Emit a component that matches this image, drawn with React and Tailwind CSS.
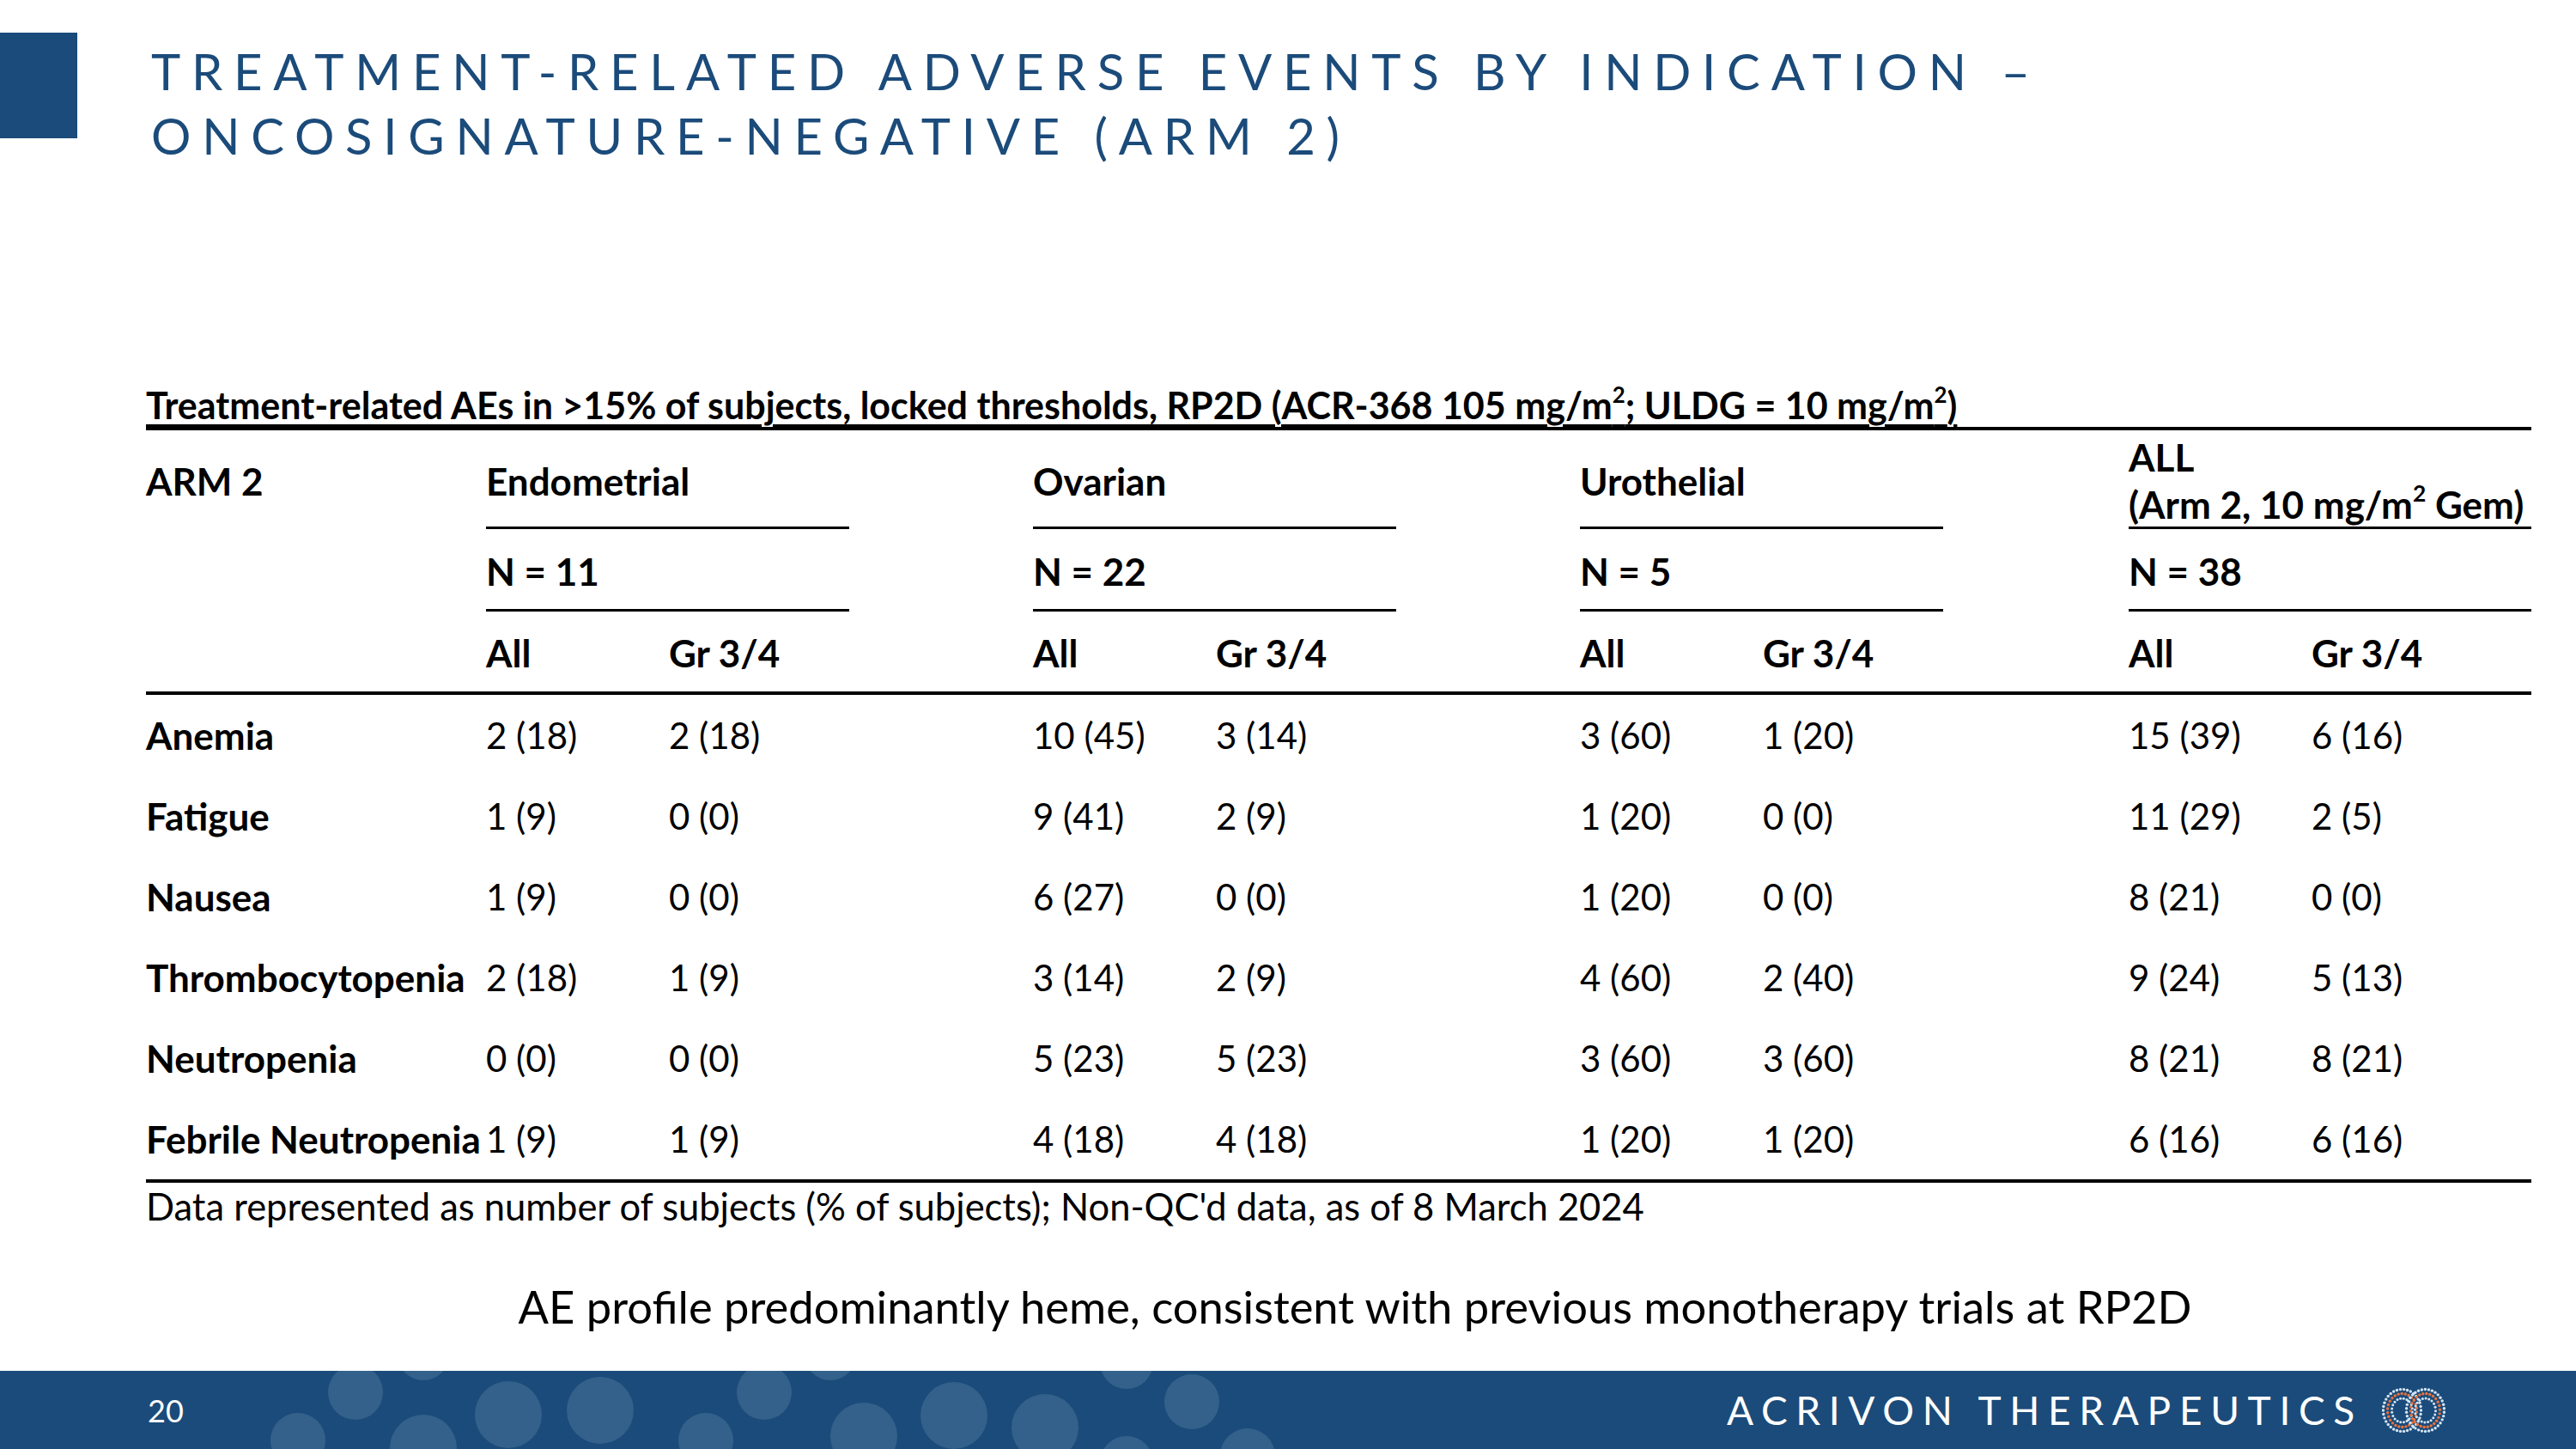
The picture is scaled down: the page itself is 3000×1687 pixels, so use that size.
import React from "react";

const COLS =
  "grid grid-cols-[396px_213px_210px_214px_213px_210px_214px_213px_210px_216px_213px_256px]";

const data = [
  ["Anemia", "2 (18)", "2 (18)", "10 (45)", "3 (14)", "3 (60)", "1 (20)", "15 (39)", "6 (16)"],
  ["Fatigue", "1 (9)", "0 (0)", "9 (41)", "2 (9)", "1 (20)", "0 (0)", "11 (29)", "2 (5)"],
  ["Nausea", "1 (9)", "0 (0)", "6 (27)", "0 (0)", "1 (20)", "0 (0)", "8 (21)", "0 (0)"],
  ["Thrombocytopenia", "2 (18)", "1 (9)", "3 (14)", "2 (9)", "4 (60)", "2 (40)", "9 (24)", "5 (13)"],
  ["Neutropenia", "0 (0)", "0 (0)", "5 (23)", "5 (23)", "3 (60)", "3 (60)", "8 (21)", "8 (21)"],
  ["Febrile Neutropenia", "1 (9)", "1 (9)", "4 (18)", "4 (18)", "1 (20)", "1 (20)", "6 (16)", "6 (16)"],
];

const circles = [
  [414, 25, 32],
  [493, -19, 30],
  [592, 51, 39],
  [699, 46, 39],
  [347, 81, 32],
  [493, 90, 39],
  [822, 81, 32],
  [890, 25, 32],
  [967, -19, 30],
  [1006, 76, 39],
  [1111, 52, 39],
  [1217, 66, 39],
  [1312, -10, 31],
  [1388, 36, 32],
  [1312, 107, 31],
  [1453, 99, 32],
];

function FooterPattern() {
  return (
    <svg className="absolute inset-0" width="3000" height="91" viewBox="0 0 3000 91">
      {circles.map(([cx, cy, r], i) => (
        <circle key={i} cx={cx} cy={cy} r={r} fill="#33618b" />
      ))}
    </svg>
  );
}

function ringDots(cx, cy, rx, ry, n, color, rad, offset = 0) {
  const out = [];
  for (let i = 0; i < n; i++) {
    const a = (i / n) * Math.PI * 2 + offset;
    out.push(
      <circle
        key={color + cx + rx + i}
        cx={cx + rx * Math.cos(a)}
        cy={cy + ry * Math.sin(a)}
        r={rad}
        fill={color}
      />
    );
  }
  return out;
}

function Logo() {
  return (
    <svg width="74" height="54" viewBox="0 0 74 54">
      {ringDots(23.5, 27, 22, 24.5, 34, "#d3e5f4", 1.7)}
      {ringDots(23.5, 27, 17, 19.5, 26, "#e8743f", 1.7, 0.1)}
      {ringDots(23.5, 27, 12, 14, 20, "#d3e5f4", 1.5, 0.15)}
      {ringDots(50.5, 27, 22, 24.5, 34, "#d3e5f4", 1.7, 0.09)}
      {ringDots(50.5, 27, 17, 19.5, 26, "#e8743f", 1.7, 0.2)}
      {ringDots(50.5, 27, 12, 14, 20, "#d3e5f4", 1.5, 0.05)}
    </svg>
  );
}

function Sup({ children }) {
  return <sup className="text-[60%] top-[-0.75em]">{children}</sup>;
}

function HeaderRow1() {
  const base = "h-[115px] pt-[6px] flex flex-col justify-center leading-[55px] border-b-[3px]";
  return (
    <div className={COLS}>
      <div className={base + " border-transparent"}>ARM 2</div>
      <div className={base + " col-span-2 border-black"}>Endometrial</div>
      <div className={base + " border-transparent"}></div>
      <div className={base + " col-span-2 border-black"}>Ovarian</div>
      <div className={base + " border-transparent"}></div>
      <div className={base + " col-span-2 border-black"}>Urothelial</div>
      <div className={base + " border-transparent"}></div>
      <div className={base + " col-span-2 border-black"}>
        <div>ALL</div>
        <div className="whitespace-nowrap">
          (Arm 2, 10 mg/m<Sup>2</Sup> Gem)
        </div>
      </div>
    </div>
  );
}

function HeaderRow2() {
  const base = "h-[96px] pt-[22px] leading-[55px] border-b-[3px]";
  return (
    <div className={COLS}>
      <div className={base + " border-transparent"}></div>
      <div className={base + " col-span-2 border-black"}>N = 11</div>
      <div className={base + " border-transparent"}></div>
      <div className={base + " col-span-2 border-black"}>N = 22</div>
      <div className={base + " border-transparent"}></div>
      <div className={base + " col-span-2 border-black"}>N = 5</div>
      <div className={base + " border-transparent"}></div>
      <div className={base + " col-span-2 border-black"}>N = 38</div>
    </div>
  );
}

function HeaderRow3() {
  const base = "h-[97px] pt-[21px] leading-[55px] border-b-4 border-black";
  const cells = ["", "All", "Gr 3/4", "", "All", "Gr 3/4", "", "All", "Gr 3/4", "", "All", "Gr 3/4"];
  return (
    <div className={COLS}>
      {cells.map((c, i) => (
        <div key={i} className={base}>
          {c}
        </div>
      ))}
    </div>
  );
}

function DataRow({ row }) {
  const [label, a, b, c, d, e, f, g, h] = row;
  const cells = [a, b, "", c, d, "", e, f, "", g, h];
  return (
    <div className={COLS}>
      <div className="h-[94px] leading-[94px] font-bold text-[44px] whitespace-nowrap">{label}</div>
      {cells.map((v, i) => (
        <div key={i} className="h-[94px] leading-[94px] whitespace-nowrap">
          {v}
        </div>
      ))}
    </div>
  );
}

export default function App() {
  return (
    <div className="w-[3000px] h-[1687px] bg-white flex flex-col overflow-hidden font-['Lato',sans-serif] text-black">
      {/* Header */}
      <div className="flex flex-row h-[195px]">
        <div className="w-[90px] h-[123px] mt-[38px] bg-[#1b4b7a] shrink-0"></div>
        <div className="ml-[86px] mt-[45px] text-[58px] leading-[75px] tracking-[0.22em] text-[#1b4b7a] whitespace-nowrap">
          <div>TREATMENT-RELATED ADVERSE EVENTS BY INDICATION –</div>
          <div>ONCOSIGNATURE-NEGATIVE (ARM 2)</div>
        </div>
      </div>

      {/* Table */}
      <div className="ml-[170px] mt-[252px] w-[2778px] text-[42px]">
        <div className="leading-[50px] border-b-4 border-black font-bold text-[43px] whitespace-nowrap">
          <span className="underline decoration-[3px] underline-offset-[6px]">
            Treatment-related AEs in &gt;15% of subjects, locked thresholds, RP2D (ACR-368 105 mg/m<Sup>2</Sup>; ULDG = 10 mg/m<Sup>2</Sup>)
          </span>
        </div>
        <div className="font-bold text-[44px]">
          <HeaderRow1 />
          <HeaderRow2 />
          <HeaderRow3 />
        </div>
        {data.map((r) => (
          <DataRow key={r[0]} row={r} />
        ))}
        <div className="h-[4px] bg-black"></div>
        <div className="leading-[54px] text-[43.5px] whitespace-nowrap">
          Data represented as number of subjects (% of subjects); Non-QC'd data, as of 8 March 2024
        </div>
      </div>

      {/* Statement */}
      <div className="mt-[60px] pl-[156px] flex justify-center">
        <div className="text-[52.5px] leading-[60px] whitespace-nowrap">
          AE profile predominantly heme, consistent with previous monotherapy trials at RP2D
        </div>
      </div>

      {/* Footer */}
      <div className="mt-auto h-[91px] relative overflow-hidden bg-[#1b4b7a] shrink-0">
        <FooterPattern />
        <div className="relative h-full flex items-center">
          <div className="ml-[172px] text-[36px] text-white">20</div>
          <div className="ml-auto flex items-center mr-[152px]">
            <div className="text-[46px] tracking-[0.21em] text-white whitespace-nowrap">
              ACRIVON THERAPEUTICS
            </div>
            <div className="ml-[22px]">
              <Logo />
            </div>
          </div>
        </div>
      </div>
    </div>
  );
}
